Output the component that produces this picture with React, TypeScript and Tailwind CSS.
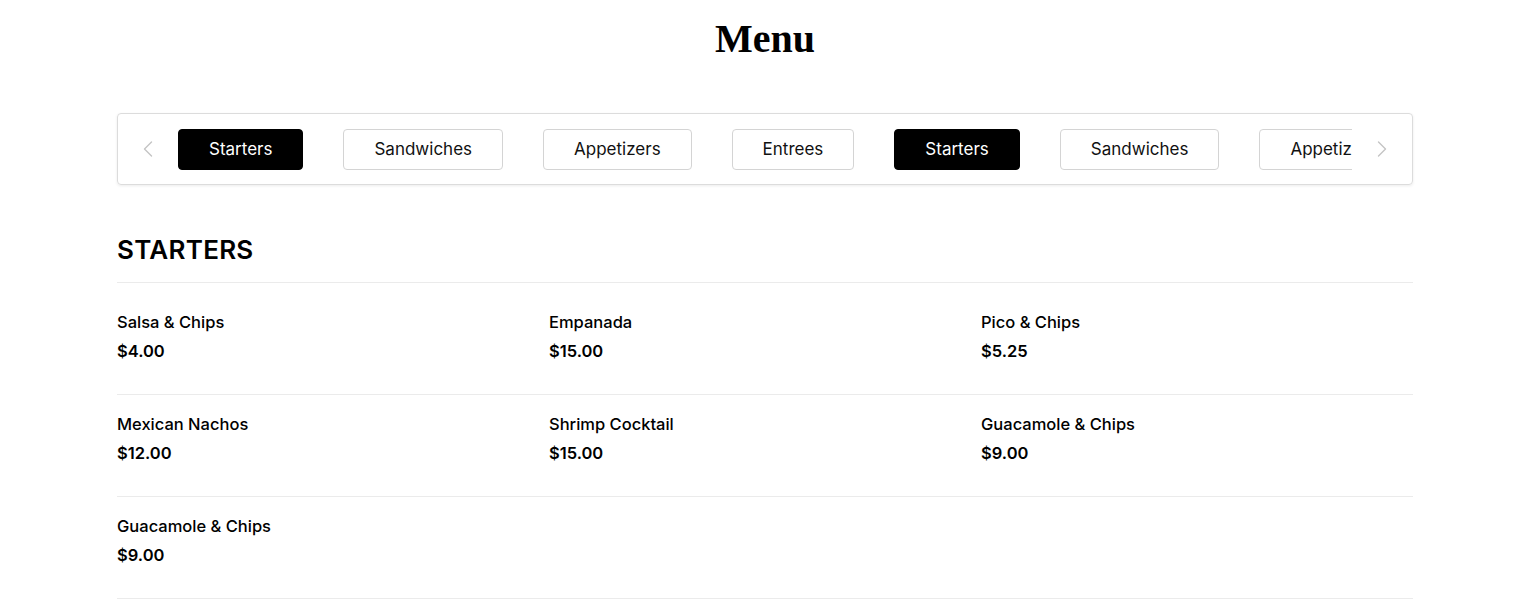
const tabs = [
  { label: "Starters", active: true },
  { label: "Sandwiches", active: false },
  { label: "Appetizers", active: false },
  { label: "Entrees", active: false },
  { label: "Starters", active: true },
  { label: "Sandwiches", active: false },
  { label: "Appetizers", active: false },
  { label: "Entrees", active: false },
];

const items = [
  { name: "Salsa & Chips", price: "$4.00" },
  { name: "Empanada", price: "$15.00" },
  { name: "Pico & Chips", price: "$5.25" },
  { name: "Mexican Nachos", price: "$12.00" },
  { name: "Shrimp Cocktail", price: "$15.00" },
  { name: "Guacamole & Chips", price: "$9.00" },
  { name: "Guacamole & Chips", price: "$9.00" },
];

function Chevron({ dir }: { dir: "left" | "right" }) {
  return (
    <button className="w-[20px] h-[20px] shrink-0 flex items-center justify-center">
      <svg width="10" height="16" viewBox="0 0 10 16" fill="none">
        <polyline
          points={dir === "left" ? "8.5,1 1.5,8 8.5,15" : "1.5,1 8.5,8 1.5,15"}
          stroke="#c4c4c4"
          strokeWidth="1.4"
          strokeLinecap="round"
          strokeLinejoin="round"
        />
      </svg>
    </button>
  );
}

export default function App() {
  const rows: (typeof items)[] = [];
  for (let i = 0; i < items.length; i += 3) rows.push(items.slice(i, i + 3));

  return (
    <div className="min-h-screen bg-white text-black font-['Inter',sans-serif]">
      <h1 className="pt-[16px] text-center font-['Liberation_Serif',serif] font-bold text-[40px] leading-[46px]">
        Menu
      </h1>

      <div className="max-w-[1296px] mx-auto">
        <div className="mt-[51px] h-[72px] border border-[#dcdcdc] rounded-[4px] shadow-[0_1px_3px_rgba(0,0,0,0.08)] flex items-center px-[20px] gap-[20px]">
          <Chevron dir="left" />
          <div className="flex-1 overflow-hidden">
            <div className="flex gap-[40px]">
              {tabs.map((t, i) => (
                <button
                  key={i}
                  className={
                    "shrink-0 h-[41px] px-[30px] pt-[2px] rounded-[4px] border text-[17px] font-normal whitespace-nowrap " +
                    (t.active
                      ? "bg-black border-black text-white"
                      : "bg-white border-[#d4d4d4] text-[#111]")
                  }
                >
                  {t.label}
                </button>
              ))}
            </div>
          </div>
          <Chevron dir="right" />
        </div>

        <h2 className="mt-[49px] pb-[16px] border-b border-[#ebebeb] text-[26px] leading-[32px] font-semibold tracking-[0.01em]">
          STARTERS
        </h2>

        <div className="mt-[10px]">
          {rows.map((row, r) => (
            <div key={r} className="grid grid-cols-3 border-b border-[#ebebeb] pt-[17px] pb-[31px]">
              {row.map((it, i) => (
                <div key={i}>
                  <div className="text-[16.5px] leading-[24px] font-medium text-black">{it.name}</div>
                  <div className="mt-[5px] text-[16.5px] leading-[24px] font-semibold text-black">{it.price}</div>
                </div>
              ))}
            </div>
          ))}
        </div>
      </div>
    </div>
  );
}
